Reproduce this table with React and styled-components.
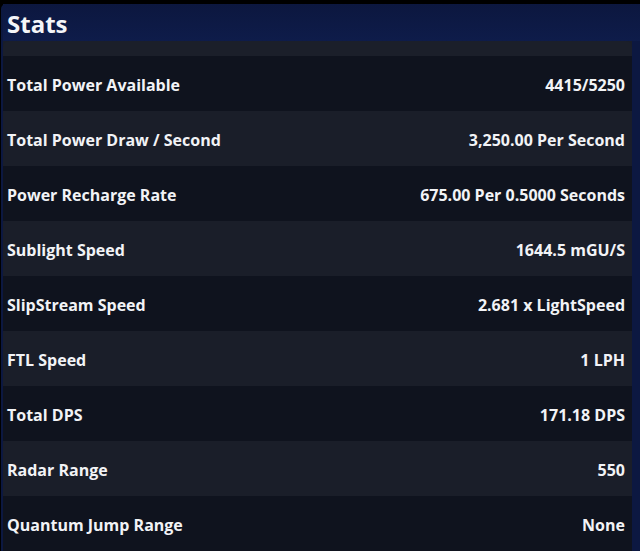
import React from "react";
import styled, { createGlobalStyle } from "styled-components";

const Global = createGlobalStyle`
  html, body { margin: 0; padding: 0; background: #000; }
  body { font-family: "Open Sans", "Noto Sans", sans-serif; }
`;

const Page = styled.div`
  width: 640px;
  height: 551px;
  background: #000;
  padding-top: 4px;
  box-sizing: border-box;
  overflow: hidden;
`;

const Panel = styled.div`
  margin-left: 1px;
  height: 547px;
  background: #0c1841;
  border-radius: 5px 0 0 0;
  padding: 0 8px 0 2px;
  display: flex;
  flex-direction: column;
  box-sizing: border-box;
`;

const Title = styled.h1`
  margin: 0 -8px 0 0;
  height: 38px;
  padding: 1px 8px 0 4px;
  box-sizing: border-box;
  display: flex;
  align-items: center;
  font-size: 24px;
  font-weight: 700;
  color: #f4f5f8;
  background: linear-gradient(180deg, #0c173f 0%, #0e1c4a 100%);
`;

const Body = styled.div`
  flex: 1;
  display: flex;
  flex-direction: column;
  background: #1a1e29;
`;

const TopStrip = styled.div`
  height: 15px;
  background: #1b1f2a;
  border-radius: 6px 6px 0 0;
`;

const Row = styled.div`
  height: 55px;
  flex: none;
  display: flex;
  align-items: center;
  justify-content: space-between;
  padding: 2px 7px 0 4px;
  box-sizing: border-box;
  background: ${(p) => (p.$alt ? "#1a1e29" : "#0f131e")};
  color: #f2f3f6;
  font-size: 16px;
  font-weight: 700;
`;

const rows = [
  ["Total Power Available", "4415/5250"],
  ["Total Power Draw / Second", "3,250.00 Per Second"],
  ["Power Recharge Rate", "675.00 Per 0.5000 Seconds"],
  ["Sublight Speed", "1644.5 mGU/S"],
  ["SlipStream Speed", "2.681 x LightSpeed"],
  ["FTL Speed", "1 LPH"],
  ["Total DPS", "171.18 DPS"],
  ["Radar Range", "550"],
  ["Quantum Jump Range", "None"],
];

export default function App() {
  return (
    <Page>
      <Global />
      <Panel>
        <Title>Stats</Title>
        <Body>
          <TopStrip />
          {rows.map(([k, v], i) => (
            <Row key={k} $alt={i % 2 === 1}>
              <span>{k}</span>
              <span>{v}</span>
            </Row>
          ))}
        </Body>
      </Panel>
    </Page>
  );
}
